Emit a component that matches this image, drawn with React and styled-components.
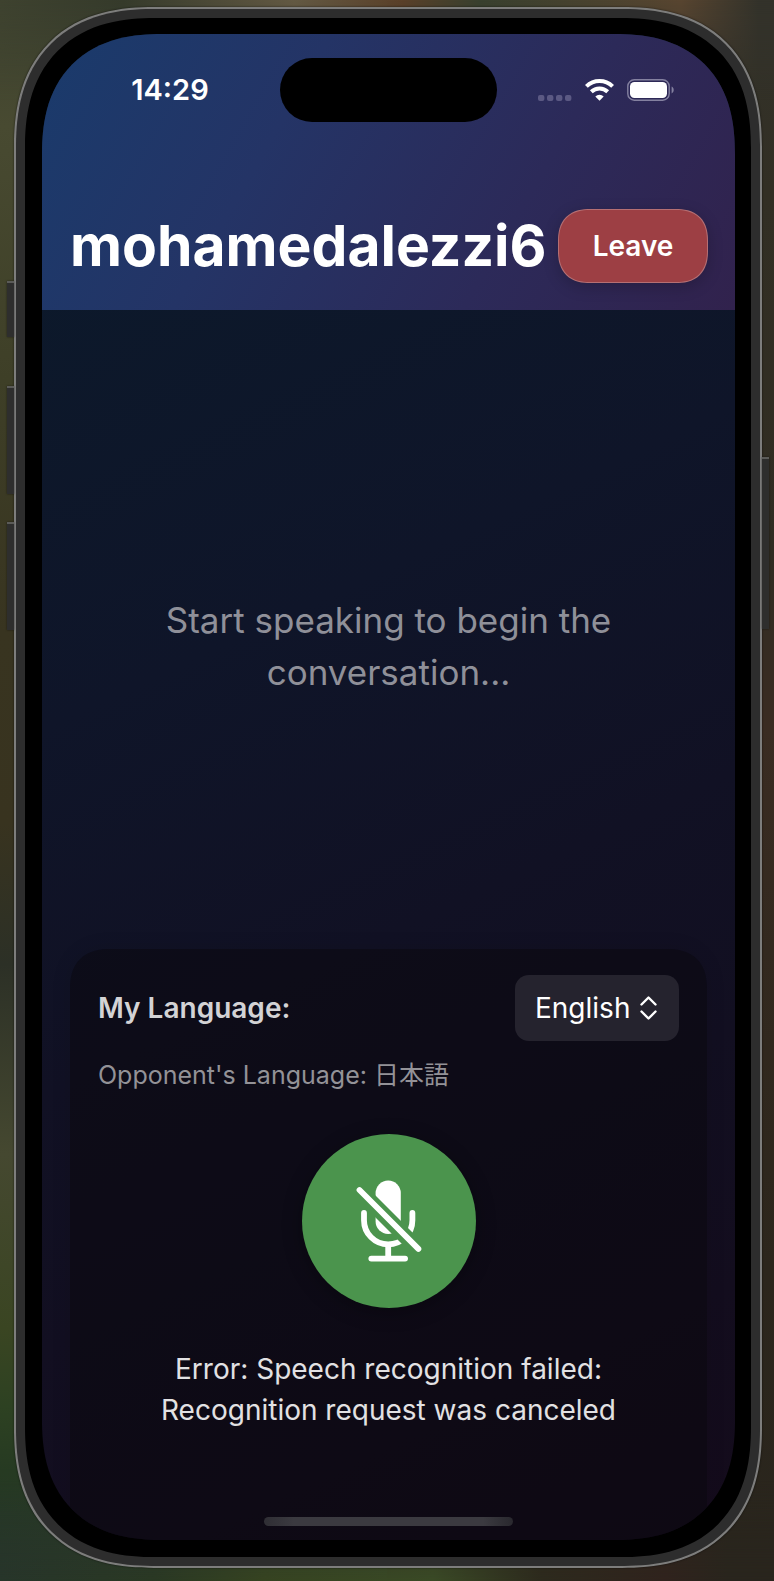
import React from "react";
import styled, { createGlobalStyle } from "styled-components";

const GlobalStyle = createGlobalStyle`
  *, *::before, *::after { box-sizing: border-box; }
  body { margin: 0; background: #2c2a1e; }
`;

const font = `Inter, "Noto Sans CJK JP", sans-serif`;

const Wallpaper = styled.main`
  position: relative;
  isolation: isolate;
  display: flex;
  min-height: 100vh;
  padding: 7px 12px 13px 14px;
  font-family: ${font};
  color: #fff;
  background:
    linear-gradient(180deg, #3e422f 0, #484a31 8%, #3e3f27 24%, #383420 40%, #38331f 52%, #2c3026 61%, #454830 73%, #3a4522 84%, #2d4122 89%, #263a22 93%, #27352a 100%) left / 50% 100% no-repeat,
    linear-gradient(180deg, #33322a 0, #322f24 12%, #302c22 35%, #3a2c22 46%, #33291f 60%, #2c261c 80%, #29251d 100%) right / 50% 100% no-repeat;

  &::before {
    content: "";
    position: absolute;
    inset: 0;
    z-index: -1;
    background:
      linear-gradient(90deg, #3e422f 0, #353a2b 16%, #635943 38%, #5a4029 52%, #38402e 62%, #584530 88%, #33322a 98%) top / 100% 50% no-repeat,
      linear-gradient(90deg, #27352a 0, #2a3824 20%, #364321 34%, #3a4a26 56%, #2d2a1d 70%, #30231d 86%, #29251d 94%) bottom / 100% 50% no-repeat;
    mask-image: linear-gradient(180deg, #000 0, transparent 100px, transparent calc(100% - 100px), #000 100%);
  }
`;

const Phone = styled.div`
  position: relative;
  flex: 1;
  display: flex;
  min-width: 0;
  border: 2px solid #7d7d7c;
  border-radius: 140px;
  corner-shape: superellipse(1.25);
  background: #2d2d2d;
  padding: 9px;
  box-shadow: 0 0 2px rgba(0, 0, 0, 0.7);
`;

const SideButton = styled.span`
  position: absolute;
  top: ${(p) => p.$top}px;
  height: ${(p) => p.$height}px;
  width: 7px;
  ${(p) => (p.$side === "left" ? "left: -9px;" : "right: -9px;")}
  border-top: 2px solid #5b5b58;
  background: #2e2e2d;
  box-shadow: 0 0 2px rgba(0, 0, 0, 0.6);
`;

const Bezel = styled.div`
  flex: 1;
  display: flex;
  min-width: 0;
  padding: 16px 16px 17px 17px;
  border-radius: 130px;
  corner-shape: superellipse(1.25);
  background: #000;
`;

const Screen = styled.div`
  position: relative;
  flex: 1;
  min-width: 0;
  display: flex;
  flex-direction: column;
  overflow: hidden;
  border-radius: 120px;
  corner-shape: superellipse(1.25);
  background: linear-gradient(155deg, #0c192b 12%, #0f1529 38%, #111124 58%, #140b1b 100%);
`;

const Header = styled.header`
  padding: 24px 27px 27px 28px;
  background: linear-gradient(120deg, #1b3a6b 4%, #243466 34%, #2c2a59 68%, #31224d 100%);
`;

const StatusBar = styled.div`
  display: grid;
  grid-template-columns: 1fr 217px 1fr;
  align-items: center;
  margin: 0 -27px 87px -28px;
`;

const Clock = styled.time`
  padding-left: 18px;
  text-align: center;
  font-size: 29px;
  font-weight: 600;
  line-height: 36px;
`;

const Island = styled.div`
  height: 64px;
  border-radius: 32px;
  background: #000;
`;

const StatusIcons = styled.div`
  display: flex;
  align-items: center;
  justify-content: center;
  gap: 13px;
  padding-right: 19px;
`;

const TitleRow = styled.div`
  display: flex;
  align-items: center;
  justify-content: space-between;
`;

const Title = styled.h1`
  margin: 0;
  font-size: 57px;
  font-weight: 650;
  line-height: 74px;
  white-space: nowrap;
`;

const LeaveButton = styled.button`
  flex: none;
  width: 150px;
  height: 74px;
  padding: 0;
  border: 1px solid rgba(255, 255, 255, 0.25);
  border-radius: 32px;
  corner-shape: superellipse(1.25);
  background: #9d3f44;
  box-shadow: 0 4px 16px rgba(0, 0, 0, 0.2);
  color: #fff;
  font: 600 28px ${font};
`;

const Conversation = styled.section`
  flex: 1;
  display: flex;
  align-items: center;
  justify-content: center;
  padding: 32px 84px 0;
`;

const EmptyHint = styled.p`
  margin: 0;
  text-align: center;
  font-size: 35px;
  line-height: 52px;
  color: #8f9099;
`;

const Panel = styled.section`
  margin: 0 28px;
  padding: 26px 28px 0;
  border-radius: 40px 40px 0 0;
  corner-shape: superellipse(1.25);
  background: rgba(9, 7, 13, 0.52);
  box-shadow: 0 0 20px rgba(0, 0, 0, 0.1);
  display: flex;
  flex-direction: column;
  min-height: 591px;
`;

const LanguageRow = styled.div`
  display: flex;
  align-items: center;
  justify-content: space-between;
`;

const Label = styled.label`
  font-size: 28px;
  font-weight: 600;
  line-height: 36px;
  color: #d3d3d5;
`;

const SelectWrap = styled.div`
  display: grid;
  align-items: center;
  > * { grid-area: 1 / 1; }
  > svg { justify-self: end; margin-right: 22px; pointer-events: none; }
`;

const Select = styled.select`
  appearance: none;
  width: 164px;
  height: 66px;
  padding: 0 20px;
  border: 0;
  border-radius: 14px;
  background: #25232e;
  color: #fff;
  font: 400 28px ${font};
`;

const Opponent = styled.p`
  margin: 16px 0 0;
  font-size: 25px;
  line-height: 36px;
  color: #939297;
`;

const MicButton = styled.button`
  align-self: center;
  display: grid;
  place-items: center;
  width: 174px;
  height: 174px;
  margin: 41px 0;
  padding: 0;
  border: 0;
  border-radius: 50%;
  background: #4b944d;
  box-shadow: 0 4px 20px rgba(0, 0, 0, 0.3);
`;

const ErrorText = styled.p`
  margin: 0;
  text-align: center;
  font-size: 28px;
  line-height: 41px;
  color: #e2e1e3;
`;

const HomeIndicator = styled.div`
  position: absolute;
  bottom: 14px;
  left: 32%;
  right: 32%;
  height: 9px;
  border-radius: 5px;
  background: linear-gradient(90deg, #2f2e34, #3b3a40 12%, #3b3a40 88%, #29282e);
`;

function SignalDots() {
  return (
    <svg width="34" height="22" viewBox="0 0 34 22" fill="#5b5983" aria-hidden="true">
      {[0, 9, 18, 27].map((x) => (
        <rect key={x} x={x} y="16" width="6.4" height="6" rx="2" />
      ))}
    </svg>
  );
}

function WifiIcon() {
  return (
    <svg width="29" height="22" viewBox="0 0 29 22" aria-hidden="true">
      <g fill="none" stroke="#fff" strokeWidth="4">
        <path d="M1.4 7.4a18.8 18.8 0 0 1 26.2 0" />
        <path d="M6.3 12.8a11.8 11.8 0 0 1 16.4 0" />
      </g>
      <path d="M14.5 21.8l-4.2-4.3a6.2 6.2 0 0 1 8.4 0z" fill="#fff" />
    </svg>
  );
}

function BatteryIcon() {
  return (
    <svg width="48" height="22" viewBox="0 0 48 22" aria-hidden="true">
      <rect x="0.8" y="0.8" width="41.4" height="20.4" rx="6.5" fill="none" stroke="#8481a0" strokeWidth="1.4" />
      <rect x="3" y="3" width="37" height="16" rx="4.5" fill="#fff" />
      <path d="M44.6 7.6v6.8c2.8-1.2 2.8-5.6 0-6.8z" fill="#8481a0" />
    </svg>
  );
}

function ChevronsIcon() {
  return (
    <svg width="17" height="24" viewBox="0 0 17 24" fill="none" stroke="#fff" strokeWidth="2.4" strokeLinecap="round" strokeLinejoin="round" aria-hidden="true">
      <path d="M1.5 8.5l7-7 7 7M1.5 15.5l7 7 7-7" />
    </svg>
  );
}

function MicOffIcon() {
  return (
    <svg width="66" height="82" viewBox="0 0 66 82" aria-hidden="true">
      <defs>
        <mask id="mic-gap" maskUnits="userSpaceOnUse" x="0" y="0" width="66" height="82">
          <rect width="66" height="82" fill="#fff" />
          <path d="M-10 -3L80 87" stroke="#000" strokeWidth="15.6" />
        </mask>
      </defs>
      <g mask="url(#mic-gap)">
        <rect x="19.6" y="0.5" width="25.2" height="53.5" rx="12.6" fill="#fff" />
        <path
          d="M8 33v7.2a24.200 24.200 0 0 0 48.400 0V33"
          fill="none"
          stroke="#fff"
          strokeWidth="5.8"
          strokeLinecap="round"
        />
      </g>
      <g fill="none" stroke="#fff" strokeWidth="5.8" strokeLinecap="round">
        <path d="M32.200 65v13M15.300 78.600h33.800" />
        <path d="M3.500 10L62.400 68.900" />
      </g>
    </svg>
  );
}

export default function App() {
  return (
    <>
      <GlobalStyle />
      <Wallpaper>
        <Phone>
          <SideButton $side="left" $top={272} $height={56} />
          <SideButton $side="left" $top={377} $height={108} />
          <SideButton $side="left" $top={513} $height={108} />
          <SideButton $side="right" $top={448} $height={172} />
          <Bezel>
            <Screen>
              <Header>
                <StatusBar>
                  <Clock>14:29</Clock>
                  <Island />
                  <StatusIcons>
                    <SignalDots />
                    <WifiIcon />
                    <BatteryIcon />
                  </StatusIcons>
                </StatusBar>
                <TitleRow>
                  <Title>mohamedalezzi6</Title>
                  <LeaveButton type="button">Leave</LeaveButton>
                </TitleRow>
              </Header>
              <Conversation>
                <EmptyHint>Start speaking to begin the conversation...</EmptyHint>
              </Conversation>
              <Panel>
                <LanguageRow>
                  <Label htmlFor="language">My Language:</Label>
                  <SelectWrap>
                    <Select id="language" defaultValue="en">
                      <option value="en">English</option>
                      <option value="ja">日本語</option>
                    </Select>
                    <ChevronsIcon />
                  </SelectWrap>
                </LanguageRow>
                <Opponent>Opponent's Language: 日本語</Opponent>
                <MicButton type="button" aria-label="Unmute microphone">
                  <MicOffIcon />
                </MicButton>
                <ErrorText role="status">
                  Error: Speech recognition failed: Recognition request was canceled
                </ErrorText>
              </Panel>
              <HomeIndicator />
            </Screen>
          </Bezel>
        </Phone>
      </Wallpaper>
    </>
  );
}
